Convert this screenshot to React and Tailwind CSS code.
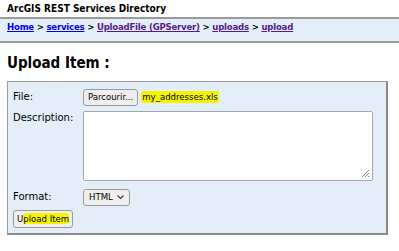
import React from "react";

function Highlight({ children, className = "" }) {
	return <span className={"bg-[#f4f400] rounded-[3px] " + className}>{children}</span>;
}

const cond = "font-['DejaVu_Sans_Condensed','DejaVu_Sans',Tahoma,sans-serif]";

export default function App() {
	return (
		<div className="w-[399px] h-[251px] bg-white text-black font-['DejaVu_Sans',Verdana,sans-serif] overflow-hidden">
			<div className={"px-[7px] pt-[3px] h-[17px] text-[10px] font-bold leading-[12px] " + cond}>ArcGIS REST Services Directory</div>
			<div className={"border-t-2 border-b-2 border-[#9a9a9a] bg-[#e4eef8] h-[26px] px-[7px] pt-[2px] text-[9.5px] font-bold leading-[12px] tracking-[-0.2px] " + cond}>
				<a className="text-[#0000ee] underline" href="#">Home</a>
				<span> &gt; </span>
				<a className="text-[#0000ee] underline" href="#">services</a>
				<span> &gt; </span>
				<a className="text-[#551a8b] underline" href="#">UploadFile (GPServer)</a>
				<span> &gt; </span>
				<a className="text-[#551a8b] underline" href="#">uploads</a>
				<span> &gt; </span>
				<a className="text-[#551a8b] underline" href="#">upload</a>
			</div>
			<h2 className={"px-[7px] mt-[10px] text-[15px] font-bold leading-[20px] " + cond}>Upload Item :</h2>
			<div className="mx-[7px] mt-[8px] w-[381px] h-[154px] bg-[#e4eef8] border border-[#9a9a9a] border-r-2 border-b-2 border-r-[#8a8a8a] border-b-[#8a8a8a] pl-[5px] pt-[6px] text-[10px] leading-[12px]">
				<div className="flex items-center h-[18px]">
					<span className="w-[70px]">File:</span>
					<button className={"h-[17px] px-[4px] border border-[#9a9a9a] rounded-[3px] bg-[#efefef] text-[9.5px] " + cond}>Parcourir...</button>
					<Highlight className={"ml-[3px] px-[1px] text-[9.5px] " + cond}>my_addresses.xls</Highlight>
				</div>
				<div className="flex items-start mt-[5px]">
					<span className="w-[70px] pt-[1px]">Description:</span>
					<div className="relative w-[290px] h-[70px] bg-white border border-[#a8a8a8] rounded-[2px]">
						<svg className="absolute right-[2px] bottom-[2px]" width="9" height="9" viewBox="0 0 9 9">
							<path d="M8 1 L1 8 M8 4 L4 8 M8 7 L7 8" stroke="#888" strokeWidth="1" />
						</svg>
					</div>
				</div>
				<div className="flex items-center mt-[7px] h-[18px]">
					<span className="w-[70px]">Format:</span>
					<div className={"h-[17px] px-[5px] border border-[#9a9a9a] rounded-[3px] bg-[#efefef] flex items-center gap-[4px] text-[9.5px] " + cond}>
						<span>HTML</span>
						<svg width="7" height="5" viewBox="0 0 7 5">
							<path d="M0.5 0.5 L3.5 3.5 L6.5 0.5" fill="none" stroke="#333" strokeWidth="1.1" />
						</svg>
					</div>
				</div>
				<button className={"mt-[4px] h-[18px] px-[3px] border border-[#9a9a9a] rounded-[3px] bg-[#efefef] text-[9.5px] " + cond}>
					U<Highlight>pload Item</Highlight>
				</button>
			</div>
		</div>
	);
}
